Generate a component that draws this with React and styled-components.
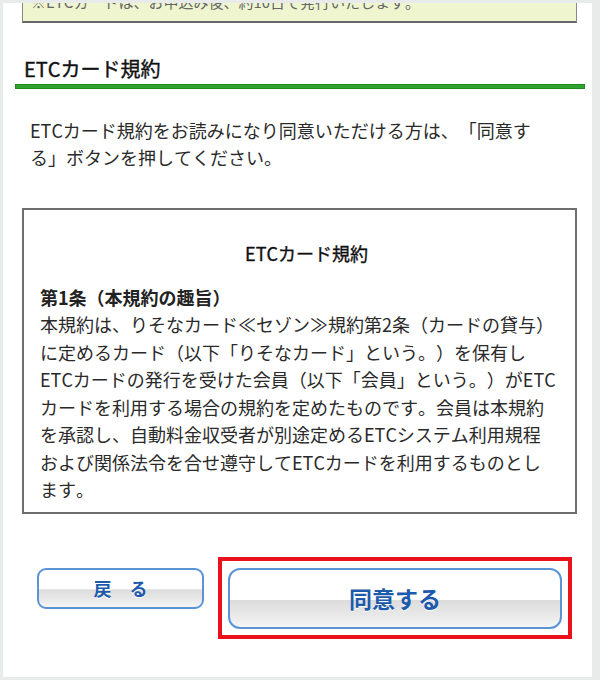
import styled, { createGlobalStyle } from "styled-components";

const GlobalStyle = createGlobalStyle`
  body {
    margin: 0;
    background: #e9ebea;
    font-family: "Noto Sans CJK JP", "Noto Sans", sans-serif;
    color: #222;
    text-spacing-trim: space-all;
    font-kerning: none;
  }
`;

export default function App() {
  return (
    <>
      <GlobalStyle />
      <Panel>
        <Notice>※ETCカードは、お申込み後、約10日で発行いたします。</Notice>

        <Heading>ETCカード規約</Heading>
        <Rule />

        <Lead>
          ETCカード規約をお読みになり同意いただける方は、「同意す
          <br />
          る」ボタンを押してください。
        </Lead>

        <TermsBox>
          <TermsTitle>ETCカード規約</TermsTitle>
          <Clause>第1条（本規約の趣旨）</Clause>
          <ClauseText>
            本規約は、りそなカード≪セゾン≫規約第2条（カードの貸与）
            <br />
            に定めるカード（以下「りそなカード」という。）を保有し
            <br />
            ETCカードの発行を受けた会員（以下「会員」という。）がETC
            <br />
            カードを利用する場合の規約を定めたものです。会員は本規約
            <br />
            を承認し、自動料金収受者が別途定めるETCシステム利用規程
            <br />
            および関係法令を合せ遵守してETCカードを利用するものとし
            <br />
            ます。
          </ClauseText>
        </TermsBox>

        <ButtonRow>
          <BackButton type="button">戻　る</BackButton>
          <Highlight>
            <AgreeButton type="button">同意する</AgreeButton>
          </Highlight>
        </ButtonRow>
      </Panel>
    </>
  );
}

const Panel = styled.div`
  margin: 3px 8px 4px 3px;
  background: #fff;
  overflow: hidden;
  padding-bottom: 38px;
`;

const Notice = styled.div`
  margin: -20px 15px 0 19px;
  padding: 8px 8px 9px;
  background: #eef5cf;
  border: 1px solid #8a8a8a;
  border-bottom: 2px solid #666;
  font-size: 15px;
  line-height: 20px;
  color: #666;
  white-space: nowrap;
`;

const Heading = styled.h2`
  margin: 32px 7px 0 12px;
  padding-left: 9px;
  font-size: 20px;
  line-height: 28px;
  font-weight: 400;
  color: #111;
  -webkit-text-stroke: 0.4px #111;
`;

const Rule = styled.div`
  margin: 1px 7px 0 12px;
  height: 3px;
  background: #2ea12e;
  border: 1px solid #1f8b1f;
`;

const Lead = styled.p`
  margin: 28px 0 0;
  padding: 0 27px;
  font-size: 18px;
  line-height: 27px;
  color: #2a2a2a;
  white-space: nowrap;
`;

const TermsBox = styled.div`
  margin: 37px 15px 0 19px;
  padding: 29px 8px 8px 16px;
  border: 2px solid #6e6e6e;
`;

const TermsTitle = styled.div`
  text-align: center;
  font-size: 18px;
  line-height: 28px;
  font-weight: 400;
  color: #111;
  -webkit-text-stroke: 0.35px #111;
  padding-left: 6px;
`;

const Clause = styled.div`
  margin-top: 16px;
  font-size: 18px;
  line-height: 28px;
  font-weight: 700;
`;

const ClauseText = styled.p`
  margin: 0;
  font-size: 18px;
  line-height: 27.5px;
  color: #2a2a2a;
  white-space: nowrap;
`;

const ButtonRow = styled.div`
  display: flex;
  align-items: flex-start;
  gap: 14px;
  margin-top: 43px;
  padding-left: 34px;
`;

const buttonFace = `
  box-sizing: border-box;
  border: 2px solid #5a94d6;
  background: linear-gradient(
    to bottom,
    #ffffff 0%,
    #ffffff 52%,
    #dcdcdc 53%,
    #e8e8e8 78%,
    #f6f6f6 100%
  );
  color: #1d5aab;
  font-family: "Noto Sans CJK JP", "Noto Sans", sans-serif;
  font-weight: 700;
  text-shadow: 0 1px 0 #fff;
  cursor: pointer;
  padding: 0;
`;

const BackButton = styled.button`
  ${buttonFace}
  width: 167px;
  height: 41px;
  margin-top: 11px;
  border-radius: 9px;
  font-size: 18px;
`;

const Highlight = styled.div`
  border: 4px solid #ea111a;
  padding: 7px 6px 6px;
`;

const AgreeButton = styled.button`
  ${buttonFace}
  display: block;
  width: 334px;
  height: 61px;
  border-radius: 12px;
  font-size: 23px;
`;
